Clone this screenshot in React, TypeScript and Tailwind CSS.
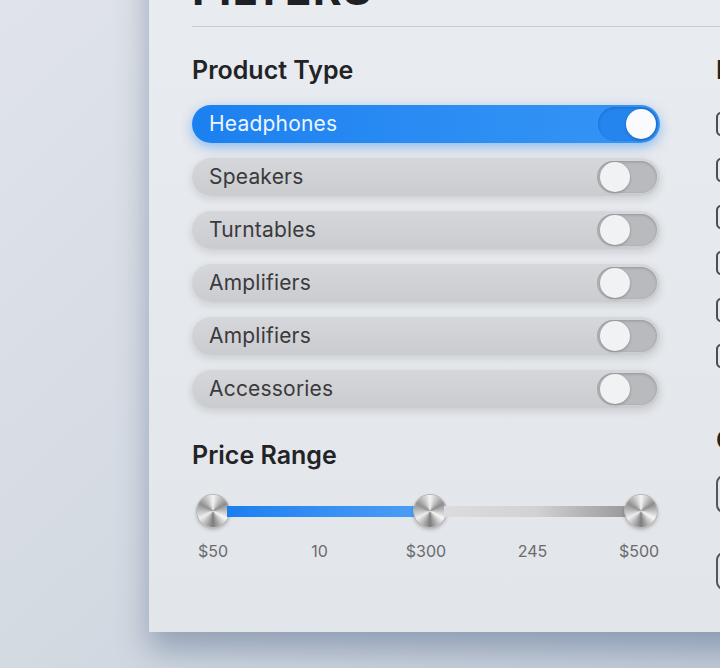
import React from "react";

const types = [
  { label: "Headphones", on: true },
  { label: "Speakers", on: false },
  { label: "Turntables", on: false },
  { label: "Amplifiers", on: false },
  { label: "Amplifiers", on: false },
  { label: "Accessories", on: false },
];

const brands = ["Sony", "Bose", "Sennheiser", "Audio-Technica", "Marshall", "JBL"];

const priceLabels = ["$50", "10", "$300", "245", "$500"];

function Knob() {
  return (
    <div className="h-8 w-8 shrink-0 rounded-full bg-[conic-gradient(#f4f4f4,#8d8d8d,#f7f7f7,#7c7c7c,#efefef,#909090,#f4f4f4)] shadow-[0_2px_4px_rgba(0,0,0,0.3)] ring-1 ring-[#b8b8b8]" />
  );
}

function TypeRow({ label, on }: { label: string; on: boolean }) {
  if (on) {
    return (
      <div className="flex h-[38px] items-center justify-between rounded-full bg-gradient-to-r from-[#1b80f0] via-[#2a8cf3] to-[#3594f5] pl-[17px] pr-[2px] shadow-[0_4px_12px_rgba(30,130,240,0.45)]">
        <span className="text-[21px] tracking-[0.2px] text-[#eef5ff]">{label}</span>
        <div className="flex h-[34px] w-[60px] items-center justify-end rounded-full bg-[#2585ee] pr-[2px] shadow-[inset_0_1px_3px_rgba(0,50,120,0.3)]">
          <div className="h-[30px] w-[30px] rounded-full bg-[#f9fbff] shadow-[0_1px_3px_rgba(0,0,0,0.25)]" />
        </div>
      </div>
    );
  }
  return (
    <div className="flex h-[38px] items-center justify-between rounded-full bg-gradient-to-b from-[#d6d7da] to-[#cbccd0] pl-[17px] pr-[3px] shadow-[0_3px_8px_rgba(0,0,0,0.12)]">
      <span className="text-[21px] tracking-[0.2px] text-[#3a3a3c]">{label}</span>
      <div className="flex h-[32px] w-[60px] items-center rounded-full bg-[#b9babe] pl-[3px] shadow-[inset_0_1px_3px_rgba(0,0,0,0.2)]">
        <div className="h-[30px] w-[30px] rounded-full bg-[#f1f2f4] shadow-[0_1px_3px_rgba(0,0,0,0.25)]" />
      </div>
    </div>
  );
}

export default function App() {
  return (
    <div
      className="flex h-[668px] overflow-hidden bg-gradient-to-br from-[#e0e4ea] via-[#d4dae2] to-[#c3ccd8] pl-[149px]"
      style={{ fontFamily: "Inter, 'Noto Sans', sans-serif" }}
    >
      <div className="-mt-[60px] h-[692px] w-[700px] shrink-0 bg-gradient-to-b from-[#e9ecf0] to-[#e2e5e9] pl-[43px] pt-[27px] shadow-[0_18px_30px_rgba(70,95,130,0.45)]">
        <h1 className="text-[44px] font-bold leading-none tracking-wide text-[#1f2023]">FILTERS</h1>
        <div className="mt-[15px] border-t border-[#c8cdd3]" />

        <div className="flex gap-[56px]">
          <div className="w-[468px] shrink-0">
            <h2 className="mt-[27px] text-[25px] font-semibold leading-8 text-[#222326]">Product Type</h2>
            <div className="mt-[19px] flex flex-col gap-[15px]">
              {types.map((t, i) => (
                <TypeRow key={i} label={t.label} on={t.on} />
              ))}
            </div>

            <h2 className="mt-[31px] text-[25px] font-semibold leading-8 text-[#222326]">Price Range</h2>
            <div className="ml-[5px] mt-[24px] flex items-center">
              <Knob />
              <div className="-mx-[2px] h-[11px] w-[189px] shrink-0 bg-gradient-to-r from-[#1a7ff0] to-[#4a9df5]" />
              <Knob />
              <div className="-mx-[2px] h-[11px] w-[183px] shrink-0 bg-gradient-to-r from-[#dcdcdc] via-[#d2d2d2] to-[#999999]" />
              <Knob />
            </div>
            <div className="mt-[12px] flex w-[468px] justify-between">
              {priceLabels.map((p) => (
                <span key={p} className="w-[42px] text-center text-[16px] leading-6 text-[#6a6b6e]">
                  {p}
                </span>
              ))}
            </div>
          </div>

          <div className="w-[200px] shrink-0">
            <h2 className="mt-[27px] text-[25px] font-semibold leading-8 text-[#222326]">Brand</h2>
            <div className="mt-[26px] flex flex-col gap-[22.4px]">
              {brands.map((b) => (
                <label key={b} className="flex h-6 items-center gap-3 text-[18px] text-[#333]">
                  <span className="h-6 w-6 rounded-[5px] border-2 border-[#4d4e52]" />
                  {b}
                </label>
              ))}
            </div>
            <h2 className="mt-[56px] text-[25px] font-semibold leading-8 text-[#222326]">Connectivity</h2>
            <div className="mt-[19px] flex h-[38px] w-[180px] items-center rounded-lg border-2 border-[#55565a] px-3 text-[18px] text-[#333]">
              Wireless
            </div>
            <div className="mt-[39px] flex h-[38px] w-[180px] items-center rounded-lg border-2 border-[#55565a] px-3 text-[18px] text-[#333]">
              Wired
            </div>
          </div>
        </div>
      </div>
    </div>
  );
}
